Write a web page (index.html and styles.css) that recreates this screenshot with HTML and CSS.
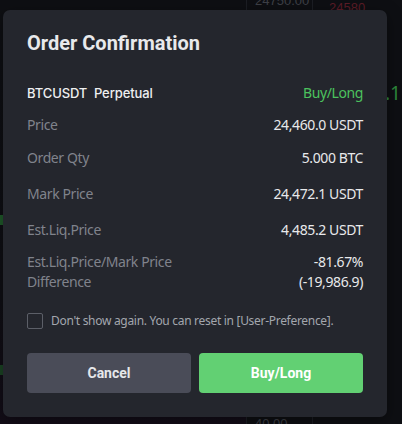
FILE: index.html
```html
<!DOCTYPE html>
<html>
<head>
<title>Order Confirmation</title>
<link rel="stylesheet" href="styles.css">
</head>
<body>

<div class="backdrop">
  <div class="chart">
    <span class="bar bar-a"></span>
    <span class="bar bar-b"></span>
  </div>
  <div class="book">
    <p class="book-price">24750.00</p>
    <p class="book-low">40.00</p>
  </div>
  <div class="book book-qty">
    <p class="book-red">24580</p>
  </div>
  <div class="ticker">.1</div>
</div>

<div class="modal">
  <h1 class="modal-title">Order Confirmation</h1>

  <div class="rows">
    <div class="row">
      <span class="symbol">BTCUSDT&nbsp; Perpetual</span>
      <span class="side">Buy/Long</span>
    </div>
    <div class="row">
      <span class="label">Price</span>
      <span class="value">24,460.0 USDT</span>
    </div>
    <div class="row row-mid">
      <span class="label">Order Qty</span>
      <span class="value">5.000 BTC</span>
    </div>
    <div class="row row-wide">
      <span class="label">Mark Price</span>
      <span class="value">24,472.1 USDT</span>
    </div>
    <div class="row row-wide">
      <span class="label">Est.Liq.Price</span>
      <span class="value">4,485.2 USDT</span>
    </div>
    <div class="row">
      <span class="label">Est.Liq.Price/Mark Price<br>Difference</span>
      <span class="value">-81.67%<br>(-19,986.9)</span>
    </div>
  </div>

  <label class="check">
    <span class="box"></span>
    <span>Don't show again. You can reset in [User-Preference].</span>
  </label>

  <div class="actions">
    <button class="btn btn-cancel">Cancel</button>
    <button class="btn btn-buy">Buy/Long</button>
  </div>
</div>

</body>
</html>
```

FILE: styles.css
```css
body {
  margin: 0;
  width: 402px;
  height: 424px;
  overflow: hidden;
  background: #0e0f13;
  font-family: 'Noto Sans', 'Open Sans', sans-serif;
  position: relative;
}

/* page behind the dialog */
.backdrop {
  display: grid;
  grid-template-columns: 246px 66px 1fr;
  height: 424px;
}

.chart {
  background: linear-gradient(180deg, #0e0f13 0%, #0f0f14 70%, #130d18 100%);
  display: flex;
  flex-direction: column;
  padding-top: 215px;
}

.bar {
  display: block;
  width: 3px;
  height: 10px;
  background: #1f5a2a;
}

.bar-b {
  margin-top: 140px;
  background: #1b4424;
}

.book {
  border-left: 1px solid #1c1e24;
  display: flex;
  flex-direction: column;
  justify-content: space-between;
  font-family: 'Liberation Sans', sans-serif;
  font-size: 13px;
  color: #3e4047;
}

.book p {
  margin: 0;
  padding-left: 8px;
}

.book-price {
  margin-top: -7px !important;
}

.book-low {
  margin-bottom: -7px !important;
}

.book-qty {
  grid-column: 3;
  grid-row: 1;
  justify-content: flex-start;
}

.book-red {
  color: #5c1c27;
  padding-left: 16px !important;
}

.ticker {
  position: absolute;
  left: 385px;
  top: 80px;
  font-size: 19px;
  color: #2d8a3d;
}

/* dialog */
.modal {
  position: absolute;
  left: 3px;
  top: 10px;
  width: 336px;
  padding: 19px 24px 24px;
  background: #24262d;
  border-radius: 7px;
  box-shadow: 0 4px 16px rgba(0, 0, 0, 0.4);
}

.modal-title {
  margin: 0;
  font-family: Roboto, sans-serif;
  font-size: 20px;
  line-height: 28px;
  font-weight: 700;
  color: #e8e9eb;
}

.rows {
  margin-top: 26px;
  display: flex;
  flex-direction: column;
  gap: 12px;
}

.row {
  display: flex;
  justify-content: space-between;
  font-size: 14px;
  line-height: 20px;
  letter-spacing: -0.4px;
}

.row-mid { margin-top: 1px; }
.row-wide { margin-top: 4px; }

.symbol {
  font-family: Inter, sans-serif;
  font-size: 13px;
  font-weight: 500;
  letter-spacing: -0.1px;
  color: #eeeff1;
}

.side {
  color: #4cc25e;
}

.label {
  color: #80838c;
}

.value {
  color: #e8e9eb;
  text-align: right;
}

.check {
  display: flex;
  align-items: center;
  gap: 8px;
  margin-top: 20px;
  font-size: 12px;
  letter-spacing: -0.3px;
  color: #a3a6ad;
}

.box {
  width: 14px;
  height: 14px;
  border: 1px solid #5c5f68;
  border-radius: 2px;
}

.actions {
  display: flex;
  gap: 8px;
  margin-top: 24px;
}

.btn {
  flex: 1;
  height: 40px;
  border: none;
  border-radius: 4px;
  font-family: Roboto, sans-serif;
  font-size: 14px;
  font-weight: 700;
  cursor: pointer;
}

.btn-cancel {
  background: #4a4c58;
  color: #e6e7ea;
}

.btn-buy {
  background: #62d073;
  color: #ffffff;
}
```
